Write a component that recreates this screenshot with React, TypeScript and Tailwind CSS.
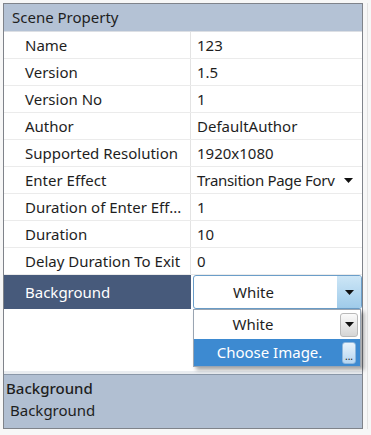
const rows: [string, string][] = [
  ['Name', '123'],
  ['Version', '1.5'],
  ['Version No', '1'],
  ['Author', 'DefaultAuthor'],
  ['Supported Resolution', '1920x1080'],
  ['Enter Effect', 'Transition Page Forv'],
  ['Duration of Enter Eff...', '1'],
  ['Duration', '10'],
  ['Delay Duration To Exit', '0'],
]

function Caret({ className = '' }: { className?: string }) {
  return (
    <svg width="9" height="5" viewBox="0 0 9 5" className={className}>
      <path d="M0 0h9L4.5 5z" fill="#111" />
    </svg>
  )
}

export default function App() {
  return (
    <div
      className="w-[371px] h-[435px] bg-[#f7f7f7] pt-[3px] pl-[3px] overflow-hidden text-[15px] text-[#1e1e1e]"
      style={{ fontFamily: '"Noto Sans", "Open Sans", sans-serif' }}
    >
      <div className="flex">
        <div className="w-[360px] h-[426px] border border-[#7f838a] bg-white flex flex-col">
          <div className="h-[28px] bg-[#b4c2d5] flex items-center pl-[8px] border-b border-[#dcdfe4]">
            Scene Property
          </div>

          {rows.map(([label, value], idx) => (
            <div key={idx} className="h-[27px] flex border-b border-[#ebebeb]">
              <div className="w-[187px] shrink-0 flex items-center pl-[21px] border-r border-[#e3e3e3] whitespace-nowrap">
                {label}
              </div>
              <div className="flex-1 flex items-center pl-[6px] pr-[9px] whitespace-nowrap">
                {label === 'Enter Effect' ? (
                  <>
                    <span className="tracking-[-0.3px]">{value}</span>
                    <Caret className="ml-auto shrink-0" />
                  </>
                ) : (
                  <span>{value}</span>
                )}
              </div>
            </div>
          ))}

          <div className="h-[34px] flex">
            <div className="w-[187px] shrink-0 bg-[#475a7b] text-white flex items-center pl-[21px]">
              Background
            </div>
            <div className="flex-1 pl-[2px] relative">
              <div className="h-full flex border border-[#6b9ec9] rounded-[3px] overflow-hidden bg-white">
                <div className="flex-1 flex items-center justify-center pr-[24px]">White</div>
                <div className="w-[24px] flex items-center justify-center bg-gradient-to-b from-[#cde6f6] to-[#9fcbea]">
                  <Caret />
                </div>
              </div>

              <div className="absolute left-[2px] top-[34px] w-[168px] bg-white border border-[#9aa5b2] shadow-[3px_3px_4px_rgba(0,0,0,0.35)] z-10">
                <div className="h-[29px] flex items-center">
                  <span className="flex-1 text-center pr-[28px]">White</span>
                  <div className="w-[18px] h-[24px] mr-[2px] rounded-[3px] border border-[#b9b9b9] bg-gradient-to-b from-[#fafafa] to-[#d5d5d5] flex items-center justify-center">
                    <Caret />
                  </div>
                </div>
                <div className="h-[27px] flex items-center bg-[#3d8ad1] text-white">
                  <span className="flex-1 text-center pl-[3px]">Choose Image.</span>
                  <div className="w-[14px] h-[22px] mr-[4px] rounded-[3px] border border-[#8fb7dc] bg-gradient-to-b from-[#e9f3fb] to-[#b6d6f1] flex items-end justify-center text-[#222] text-[10px] leading-[12px] pb-[1px]">
                    ...
                  </div>
                </div>
              </div>
            </div>
          </div>

          <div className="flex-1 border-b-[3px] border-[#e9ecf0]" />

          <div className="h-[54px] bg-[#b1bfd2] border-t border-[#8a97a8] pl-[2px] leading-[22px] pt-[2px]">
            <div className="font-medium">Background</div>
            <div className="pl-[4px]">Background</div>
          </div>
        </div>
        <div className="w-[8px] h-[426px] flex justify-center">
          <div className="w-px h-full bg-[#e2e2e2]" />
        </div>
      </div>
    </div>
  )
}
